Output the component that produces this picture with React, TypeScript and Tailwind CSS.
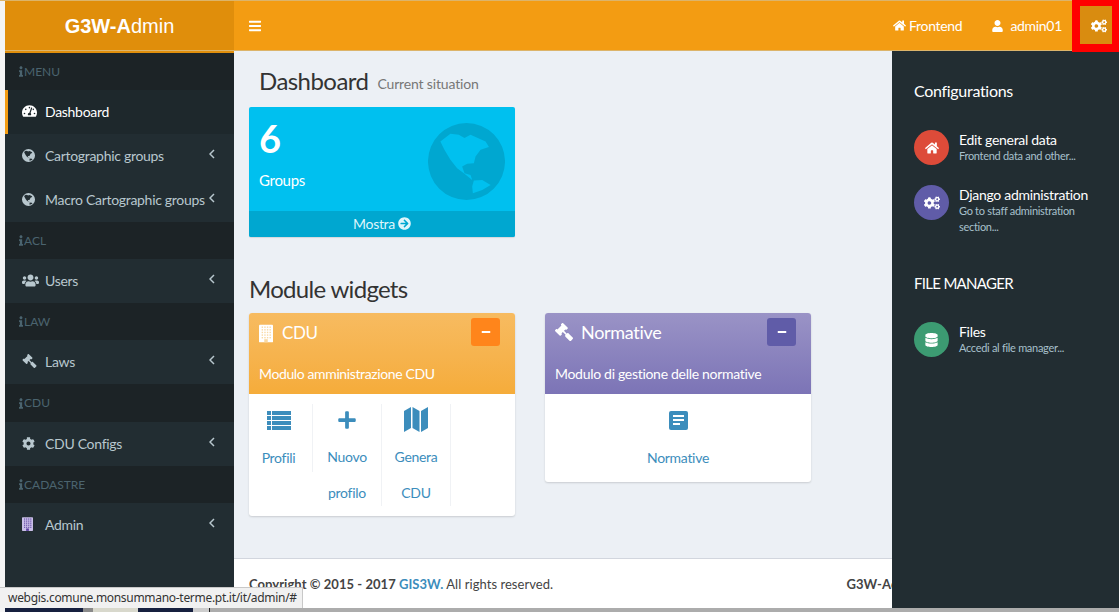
import type { ReactNode } from "react";
import {
  FaArrowCircleRight,
  FaBars,
  FaCog,
  FaCogs,
  FaDatabase,
  FaGavel,
  FaHome,
  FaInfo,
  FaMinus,
  FaPlus,
  FaTachometerAlt,
  FaUser,
  FaUsers,
} from "react-icons/fa";

function Globe({ className }: { className: string }) {
  return (
    <svg viewBox="0 0 230 230" className={className} fill="currentColor">
      <path
        fillRule="evenodd"
        d="M115 0a115 115 0 1 0 0 230a115 115 0 1 0 0-230z M37 55L67 32L92 35L109 45L127 35L142 42L172 55L182 72L157 80L142 100L137 120L117 122L102 130L109 150L127 155L132 170L107 150L87 135L67 110L49 80z M137 172L162 170L187 185L162 200L134 210L132 190z"
      />
    </svg>
  );
}

function Building({ className, windows }: { className: string; windows: string }) {
  const cols = [3, 6, 9, 12];
  const rows = [2, 5, 8, 11, 14];
  return (
    <svg viewBox="0 0 16 20" className={className}>
      <rect width="16" height="20" rx="1" fill="currentColor" />
      {rows.map((y) =>
        cols.map((x) => <rect key={`${x}-${y}`} x={x} y={y} width="1.6" height="1.6" fill={windows} />),
      )}
      <rect x="6" y="16.5" width="4" height="3.5" fill={windows} />
    </svg>
  );
}

function ListIcon() {
  return (
    <svg viewBox="0 0 24 19" className="w-[24px] h-[19px]" fill="currentColor">
      {[0, 5, 10, 15].map((y) => (
        <g key={y}>
          <rect x="0" y={y} width="4" height="4" />
          <rect x="5" y={y} width="19" height="4" />
        </g>
      ))}
    </svg>
  );
}

function MapIcon() {
  return (
    <svg viewBox="0 0 24 25" className="w-[24px] h-[25px]" fill="currentColor">
      <polygon points="0,4 7,0 7,21 0,25" />
      <polygon points="8.5,0 15.5,4 15.5,25 8.5,21" />
      <polygon points="17,4 24,0 24,21 17,25" />
    </svg>
  );
}

function SectionLabel({ label, height = "h-[37px]" }: { label: string; height?: string }) {
  return (
    <div className={`${height} bg-[#1c2326] pl-[14px] flex items-center text-[12px] tracking-normal text-[#4b646f]`}>
      <FaInfo className="w-[4px] h-[11px]" />
      <span className="ml-[1px]">{label}</span>
    </div>
  );
}

function MenuItem({ icon, label }: { icon: ReactNode; label: string }) {
  return (
    <div className="h-[44px] flex items-center pl-[17px] pb-[2px] text-[#b8c7ce] text-[14px]">
      <span className="w-[23px] shrink-0 flex items-center">{icon}</span>
      <span className="whitespace-nowrap">{label}</span>
      <svg viewBox="0 0 6 10" className="absolute left-[204px] w-[6px] h-[10px] -mt-[2px]" fill="none" stroke="currentColor" strokeWidth="1.5">
        <polyline points="5,1 1,5 5,9" />
      </svg>
    </div>
  );
}

function Sidebar() {
  return (
    <aside className="relative w-[229px] shrink-0 bg-[#222d32] flex flex-col border-t-2 border-[#e08e0b]">
      <SectionLabel label="MENU" />
      <div className="h-[44px] flex items-center pl-[14px] pb-[2px] text-white text-[14px] bg-[#1e282c] border-l-[3px] border-[#f39c12]">
        <span className="w-[23px] flex items-center">
          <FaTachometerAlt className="w-[15px] h-[14px]" />
        </span>
        <span>Dashboard</span>
      </div>
      <MenuItem icon={<Globe className="w-[13px] h-[13px]" />} label="Cartographic groups" />
      <MenuItem icon={<Globe className="w-[13px] h-[13px]" />} label="Macro Cartographic groups" />
      <SectionLabel label="ACL" />
      <MenuItem icon={<FaUsers className="w-[17px] h-[15px]" />} label="Users" />
      <SectionLabel label="LAW" />
      <MenuItem icon={<FaGavel className="w-[15px] h-[14px] -scale-x-100" />} label="Laws" />
      <SectionLabel label="CDU" height="h-[38px]" />
      <MenuItem icon={<FaCog className="w-[13px] h-[13px]" />} label="CDU Configs" />
      <SectionLabel label="CADASTRE" />
      <MenuItem icon={<Building className="w-[11px] h-[14px] text-[#c9bfe8]" windows="#5b3fa0" />} label="Admin" />
    </aside>
  );
}

function Header() {
  return (
    <header className="h-[50px] flex shrink-0 border-b border-[#dcb46a]">
      <div className="w-[229px] shrink-0 bg-[#e08e0b] text-white text-[20px] tracking-normal flex items-center justify-center font-['Liberation_Sans',sans-serif]">
        <b>G3W-A</b>
        <span>dmin</span>
      </div>
      <div className="flex-1 bg-[#f39c12] flex items-center text-white text-[14px] pr-[57px]">
        <FaBars className="ml-[15px] w-[12px] h-[14px]" />
        <div className="ml-auto flex items-center">
          <FaHome className="w-[13px] h-[13px] mr-[3px]" />
          <span>Frontend</span>
        </div>
        <div className="ml-[30px] flex items-center">
          <FaUser className="w-[11px] h-[12px] mr-[7px]" />
          <span>admin01</span>
        </div>
      </div>
    </header>
  );
}

function ModuleLink({ icon, lines, divider = true, width }: { icon: ReactNode; lines: string[]; divider?: boolean; width: string }) {
  return (
    <div className={`${width} flex flex-col items-center ${divider ? "border-r border-[#f0f2f5]" : ""} text-[#3c8dbc] text-[14px]`}>
      <div className="h-[30px] flex items-center mt-[1px]">{icon}</div>
      {lines.map((l) => (
        <div key={l} className="h-[36px] flex items-center mt-[4px] -mb-[4px] whitespace-nowrap">
          {l}
        </div>
      ))}
    </div>
  );
}

function ControlItem({ color, icon, title, sub }: { color: string; icon: ReactNode; title: string; sub: string[] }) {
  return (
    <div className="flex">
      <div className={`w-[35px] h-[35px] rounded-full ${color} flex items-center justify-center text-white shrink-0`}>{icon}</div>
      <div className="ml-[10px]">
        <div className="text-[14px] leading-[17px] text-white mt-[1px]">{title}</div>
        {sub.map((s) => (
          <div key={s} className="text-[11px] leading-[16px] text-[#a8c0cc]">
            {s}
          </div>
        ))}
      </div>
    </div>
  );
}

function ControlSidebar() {
  return (
    <aside className="absolute right-0 top-[51px] bottom-0 w-[227px] bg-[#222d32] pl-[22px]">
      <div className="mt-[30px] text-[16px] leading-[20px] text-white">Configurations</div>
      <div className="mt-[29px]">
        <ControlItem color="bg-[#dd4b39]" icon={<FaHome className="w-[14px] h-[14px]" />} title="Edit general data" sub={["Frontend data and other..."]} />
      </div>
      <div className="mt-[20px]">
        <ControlItem color="bg-[#605ca8]" icon={<FaCogs className="w-[16px] h-[14px]" />} title="Django administration" sub={["Go to staff administration", "section..."]} />
      </div>
      <div className="mt-[38px] text-[15px] tracking-[-0.7px] leading-[20px] text-white">FILE MANAGER</div>
      <div className="mt-[29px]">
        <ControlItem color="bg-[#3c9b72]" icon={<FaDatabase className="w-[13px] h-[14px]" />} title="Files" sub={["Accedi al file manager..."]} />
      </div>
    </aside>
  );
}

export default function App() {
  return (
    <div className="relative w-[1119px] h-[612px] overflow-hidden bg-[#f4f4f4] pl-[5px] pt-[1px] tracking-[-0.3px] font-['Lato','Noto_Sans',sans-serif]">
      <div className="absolute left-0 right-0 top-0 h-px bg-[#dcb46a]" />
      <Header />
      <div className="flex h-[561px]">
        <Sidebar />
        <main className="flex-1 bg-[#ecf0f5] flex flex-col">
          <div className="flex-1 pl-[15px]">
            <div className="pl-[10px] pt-[17px] flex items-baseline text-[#333]">
              <h1 className="text-[24px] leading-[26px] tracking-[-0.55px]">Dashboard</h1>
              <span className="ml-[9px] text-[14px] tracking-[-0.15px] text-[#777] -translate-y-px">Current situation</span>
            </div>
            <div className="mt-[12px] w-[266px] h-[130px] rounded-[2px] bg-[#00c0ef] text-white relative overflow-hidden shadow-[0_1px_1px_rgba(0,0,0,0.1)]">
              <div className="pl-[10px] pt-[10px] text-[38px] leading-[42px] font-bold">6</div>
              <div className="pl-[10px] mt-[10px] text-[15px] leading-[22px]">Groups</div>
              <Globe className="absolute right-[10px] top-[16px] w-[77px] h-[77px] text-[#00a7d0]" />
              <div className="absolute left-0 right-0 bottom-0 h-[26px] pb-[2px] bg-[#00a7d0] text-[#dff5fb] text-[14px] flex items-center justify-center">
                Mostra
                <FaArrowCircleRight className="ml-[3px] w-[13px] h-[13px]" />
              </div>
            </div>
            <h2 className="mt-[37px] text-[24px] leading-[30px] tracking-[-0.7px] text-[#333]">Module widgets</h2>
            <div className="mt-[9px] flex gap-[30px] items-start">
              <section className="w-[266px] rounded-[3px] overflow-hidden bg-white shadow-[0_1px_2px_rgba(0,0,0,0.15)]">
                <div className="h-[81px] bg-gradient-to-b from-[#f7bb60] to-[#f5ac3a] text-white px-[10px] relative tracking-[-0.38px]">
                  <div className="flex items-center pt-[9px]">
                    <Building className="w-[14px] h-[19px] mr-[9px]" windows="#f9d9a3" />
                    <span className="text-[17px] leading-[22px]">CDU</span>
                  </div>
                  <div className="absolute right-[15px] top-[5px] w-[29px] h-[28px] rounded-[3px] bg-[#ff851b] flex items-center justify-center">
                    <FaMinus className="w-[10px] h-[10px]" />
                  </div>
                  <div className="absolute left-[10px] top-[51px] text-[14px] leading-[20px]">Modulo amministrazione CDU</div>
                </div>
                <div className="flex h-[122px] pt-[10px]">
                  <ModuleLink width="w-[64px] pr-[4px] h-[68px]" icon={<ListIcon />} lines={["Profili"]} />
                  <ModuleLink width="w-[69px] h-[102px]" icon={<FaPlus className="w-[20px] h-[20px]" />} lines={["Nuovo", "profilo"]} />
                  <ModuleLink width="w-[69px] h-[102px]" icon={<MapIcon />} lines={["Genera", "CDU"]} />
                </div>
              </section>
              <section className="w-[266px] rounded-[3px] overflow-hidden bg-white shadow-[0_1px_2px_rgba(0,0,0,0.15)]">
                <div className="h-[81px] bg-gradient-to-b from-[#9a93c6] to-[#7c74b6] text-white px-[10px] relative tracking-[-0.3px]">
                  <div className="flex items-center pt-[8px]">
                    <FaGavel className="w-[18px] h-[18px] mr-[8px] -scale-x-100" />
                    <span className="text-[18px] leading-[22px]">Normative</span>
                  </div>
                  <div className="absolute right-[15px] top-[5px] w-[29px] h-[28px] rounded-[3px] bg-[#605ca8] flex items-center justify-center">
                    <FaMinus className="w-[10px] h-[10px]" />
                  </div>
                  <div className="absolute left-[10px] top-[51px] text-[14px] leading-[20px]">Modulo di gestione delle normative</div>
                </div>
                <div className="flex justify-center h-[88px] pt-[10px]">
                  <ModuleLink
                    width="w-[100px]"
                    divider={false}
                    icon={
                      <div className="w-[19px] h-[19px] rounded-[2px] bg-[#3c8dbc] flex flex-col justify-center gap-[2px] pl-[4px]">
                        <span className="block w-[11px] h-[2px] bg-white" />
                        <span className="block w-[11px] h-[2px] bg-white" />
                        <span className="block w-[7px] h-[2px] bg-white" />
                      </div>
                    }
                    lines={["Normative"]}
                  />
                </div>
              </section>
            </div>
          </div>
          <footer className="h-[53px] mb-[1px] bg-white border-t border-[#d2d6de] flex items-center justify-between pl-[15px] pr-[199px] text-[13px] tracking-[0.05px] text-[#444]">
            <div>
              <b>Copyright © 2015 - 2017 </b>
              <b className="text-[#3c8dbc]">GIS3W.</b> All rights reserved.
            </div>
            <b>G3W-Admin</b>
          </footer>
        </main>
      </div>
      <ControlSidebar />
      <div className="absolute right-0 top-0 w-[47px] h-[52px] bg-[#d98c10] border-l-[8px] border-t-[6px] border-r-[7px] border-b-[8px] border-[#ff0000] flex items-center justify-center text-white">
        <FaCogs className="w-[16px] h-[14px] ml-[6px] mt-[2px]" />
      </div>
      <div className="absolute left-0 bottom-[4px] h-[21px] pl-[8px] pr-[5px] bg-[#f1f1f1] border-t border-r border-[#c8c8c8] text-[12px] leading-[20px] tracking-[-0.3px] text-[#333] font-['Noto_Sans',sans-serif] whitespace-nowrap">
        webgis.comune.monsummano-terme.pt.it/it/admin/#
      </div>
      <div className="absolute left-0 right-0 bottom-0 h-[4px] bg-[#acacac] flex">
        <div className="w-[5px] bg-[#f4f4f4]" />
        <div className="w-[78px] bg-[#16203f]" />
        <div className="w-[10px] bg-[#8a8a8a]" />
        <div className="w-[45px] bg-[#d8d8cc]" />
        <div className="w-[55px] bg-[#16203f]" />
        <div className="w-[16px] bg-[#cccccc]" />
        <div className="w-px bg-[#222222]" />
      </div>
    </div>
  );
}
